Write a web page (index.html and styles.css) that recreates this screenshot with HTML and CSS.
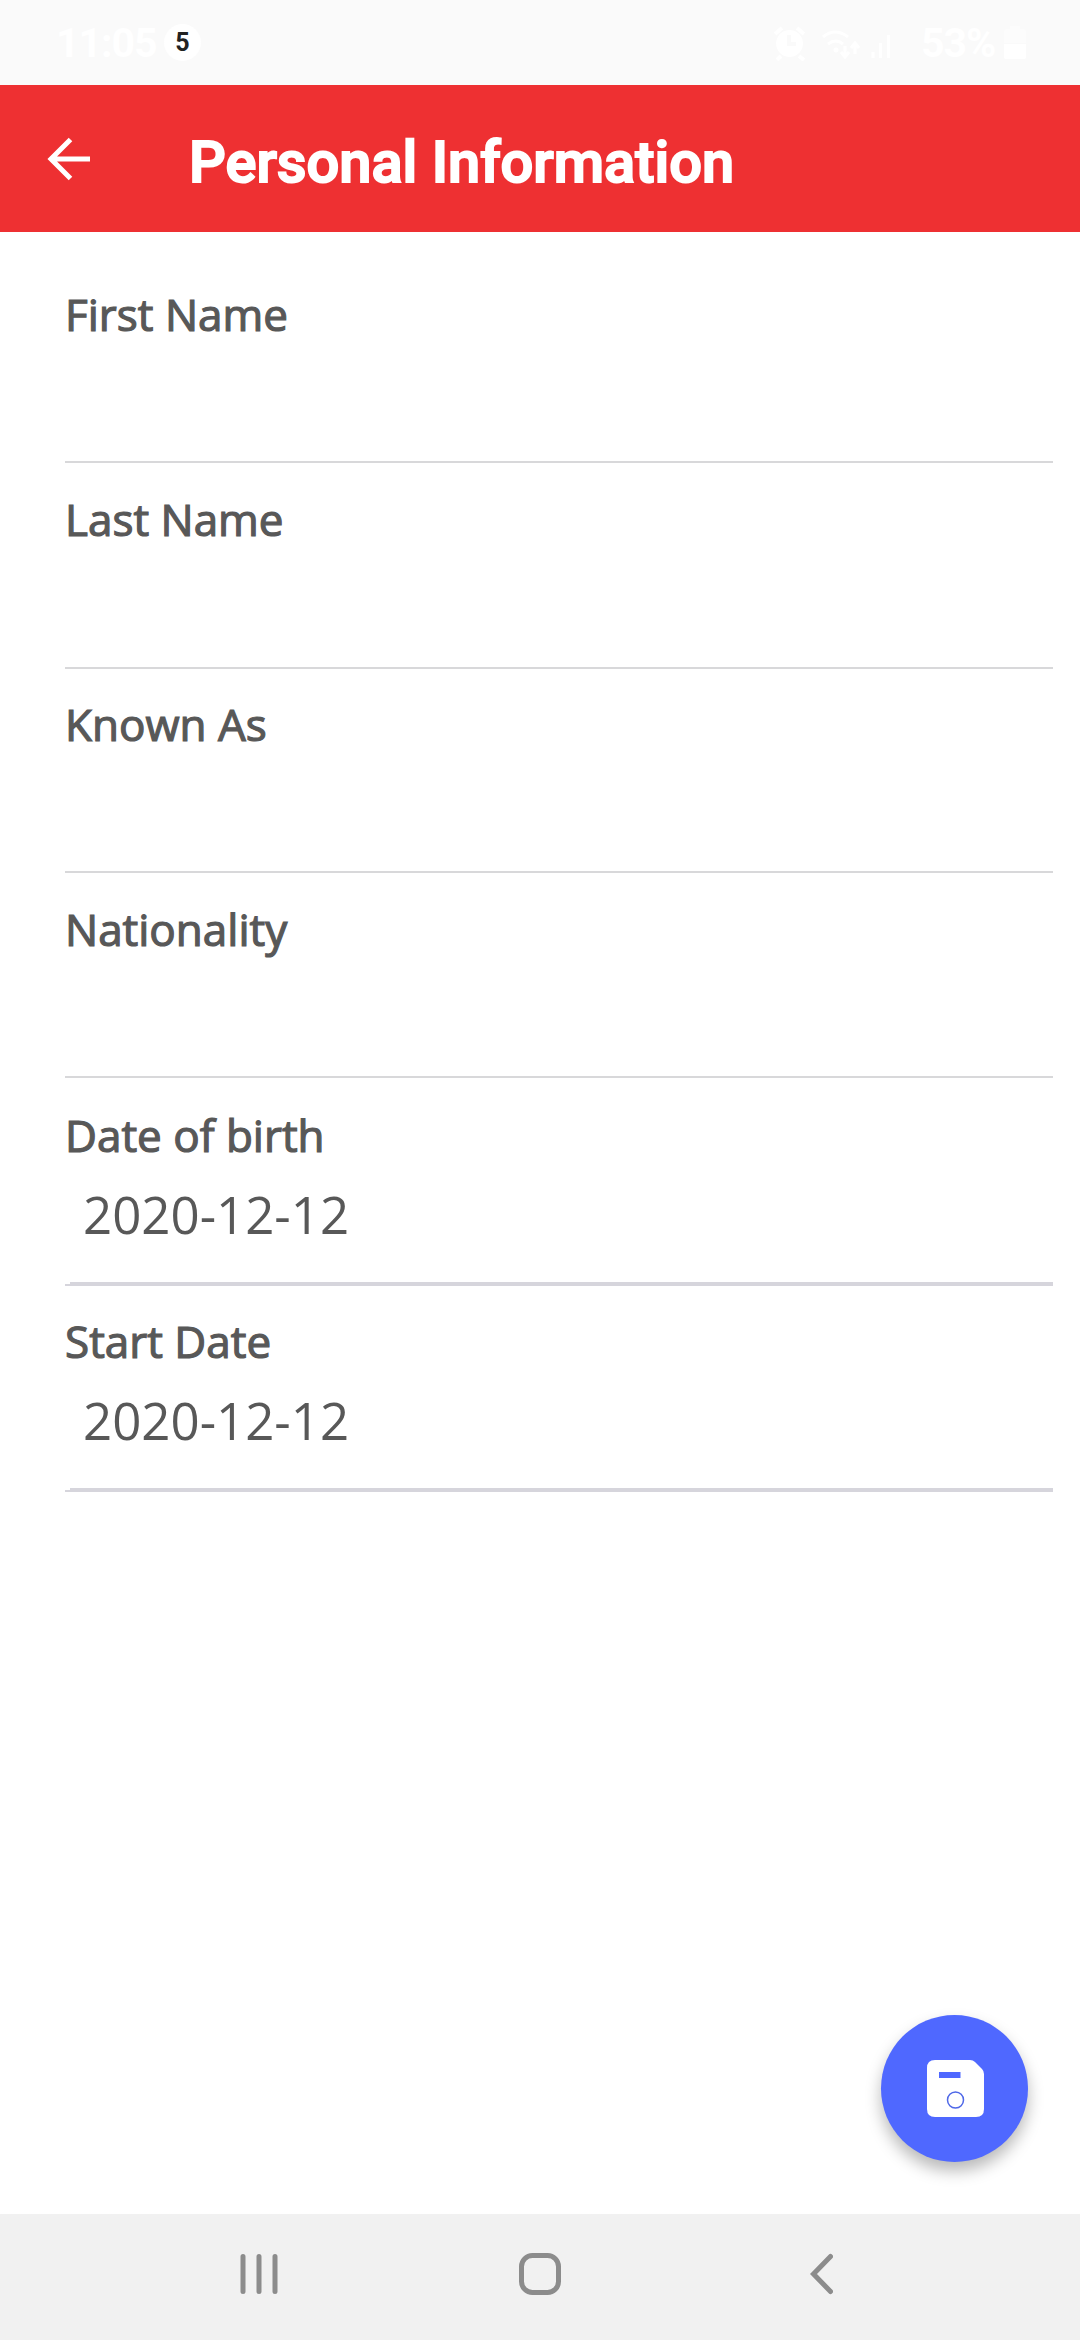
FILE: index.html
```html
<!DOCTYPE html>
<html lang="en">
<head>
<meta charset="utf-8">
<title>Personal Information</title>
<link rel="stylesheet" href="styles.css">
</head>
<body>
<div class="screen">
  <div class="status">
    <span class="clock">11:05</span>
    <span class="count">5</span>
    <svg class="indicators" width="149" height="40" viewBox="0 0 149 40">
      <g fill="none" stroke="#fff" stroke-width="4">
        <path d="M3 13l7-6M32 13l-7-6M9 35l-4 4M27 35l5 4"/>
      </g>
      <path fill="#fff" fill-rule="evenodd" d="M17.500 9a13.500 13.500 0 1 0 .1 0zM15 14h4v7h5v4h-9z"/>
      <g fill="none" stroke="#fff" stroke-width="3">
        <path d="M51 16q12-10 25 0M56 23q8-6 15 0"/>
        <path d="M73 25v10m-4-4l4 5 4-5M83 33V23m-4 4l4-5 4 5"/>
        <path d="M101 37v-6M108.500 37V22M116.500 37V14"/>
      </g>
      <circle cx="64" cy="29" r="2.500" fill="#fff"/>
    </svg>
    <span class="percent">53%</span>
    <svg class="battery" width="22" height="34" viewBox="0 0 22 34"><path fill="#fcfcfc" d="M0 6q0-3 3-3h3V0h10v3h3q3 0 3 3v11H0z"/><path fill="#fff" d="M0 18h22v13q0 2-2 2H2q-2 0-2-2z"/></svg>
  </div>
  <header class="bar">
    <svg class="back" width="44" height="44" viewBox="0 0 44 44"><path d="M23.500 2.500L4 22l19.500 19.500M4 22h39" fill="none" stroke="#fff" stroke-width="5"/></svg>
    <h1 class="title">Personal Information</h1>
  </header>
  <main class="form">
    <div class="field"><div class="label">First Name</div></div>
    <div class="field last-name"><div class="label">Last Name</div></div>
    <div class="field known-as"><div class="label">Known As</div></div>
    <div class="field"><div class="label">Nationality</div></div>
    <div class="field dated birth"><div class="label">Date of birth</div><div class="value">2020-12-12</div></div>
    <div class="field dated start"><div class="label">Start Date</div><div class="value">2020-12-12</div></div>
    <div class="fab">
      <svg width="57" height="57" viewBox="0 0 57 57"><path fill="#fff" d="M8 0h35q3 0 5 2l7 7q2 2 2 5v35q0 8-8 8H8q-8 0-8-8V8Q0 0 8 0z"/><path fill="#4f68ff" d="M12 12h21.500v6H12z"/><circle cx="28.500" cy="40" r="8" fill="none" stroke="#4f68e8" stroke-width="1.500"/></svg>
    </div>
  </main>
  <nav class="nav">
    <svg width="40" height="42" viewBox="0 0 40 42"><path d="M4 3.500v35M20 3.500v35M36 3.500v35" stroke="#8c8c8c" stroke-width="5" stroke-linecap="round"/></svg>
    <svg width="42" height="42" viewBox="0 0 42 42"><rect x="2.500" y="2.500" width="37" height="37" rx="11" fill="none" stroke="#8c8c8c" stroke-width="5"/></svg>
    <svg class="nav-back" width="24" height="42" viewBox="0 0 24 42"><path d="M21.500 3.500L4.500 21l17 17.500" fill="none" stroke="#8c8c8c" stroke-width="5" stroke-linecap="round"/></svg>
  </nav>
</div>
</body>
</html>
```
FILE: styles.css
```css
body { margin: 0; }
.screen {
  width: 1080px;
  height: 2340px;
  display: flex;
  flex-direction: column;
  background: #fff;
  font-family: "Open Sans", "Noto Sans", sans-serif;
  color: #585858;
}
.status {
  height: 85px;
  box-sizing: border-box;
  padding: 0 54px 0 56px;
  display: flex;
  align-items: center;
  background: #fafafa;
  color: #fff;
  font-family: Roboto, sans-serif;
  font-weight: 700;
}
.clock { width: 108px; font-size: 41px; letter-spacing: -1px; }
.count {
  width: 37px;
  height: 37px;
  border-radius: 50%;
  background: #fff;
  color: #222;
  font-size: 25px;
  line-height: 38px;
  text-align: center;
}
.indicators { margin-left: auto; margin-top: -3px; }
.percent { width: 81px; margin-right: 2px; font-size: 41px; letter-spacing: -1px; }
.bar {
  height: 147px;
  box-sizing: border-box;
  padding-left: 47px;
  display: flex;
  align-items: center;
  background: #ee3032;
  color: #fff;
}
.title {
  margin: 6px 0 0 98px;
  font: 500 57.75px/70px Roboto, sans-serif;
  -webkit-text-stroke: 2px #fff;
  white-space: nowrap;
}
.form {
  position: relative;
  flex: 1;
  padding: 26px 27px 0 65px;
}
.field {
  height: 205px;
  box-sizing: border-box;
  padding-top: 27px;
  border-bottom: 2px solid #d8d8da;
}
.label {
  font-size: 44px;
  line-height: 58px;
  -webkit-text-stroke: 1.2px #585858;
}
.last-name { height: 206px; }
.known-as { height: 204px; padding-top: 26px; }
.value {
  margin-top: 15px;
  padding-left: 18px;
  font-size: 51px;
  line-height: 70px;
}
.dated { position: relative; border-color: #d6d5dc; }
.birth { height: 208px; padding-top: 28px; }
.start { height: 206px; padding-top: 26px; }
.dated::after {
  content: "";
  position: absolute;
  left: 5px;
  right: 0;
  bottom: 0;
  height: 2px;
  background: #d6d5dc;
}
.fab {
  position: absolute;
  left: 881px;
  bottom: 52px;
  width: 147px;
  height: 147px;
  border-radius: 50%;
  background: #4f68ff;
  display: flex;
  align-items: center;
  justify-content: center;
  box-shadow: 0 9px 16px rgba(0, 0, 0, .28);
}
.fab svg { margin: -1px 0 0 2px; }
.nav {
  height: 126px;
  box-sizing: border-box;
  padding: 0 247px 6px 239px;
  display: flex;
  align-items: center;
  gap: 240px;
  background: #f1f1f1;
}
.nav-back { margin-left: 8px; }
```
